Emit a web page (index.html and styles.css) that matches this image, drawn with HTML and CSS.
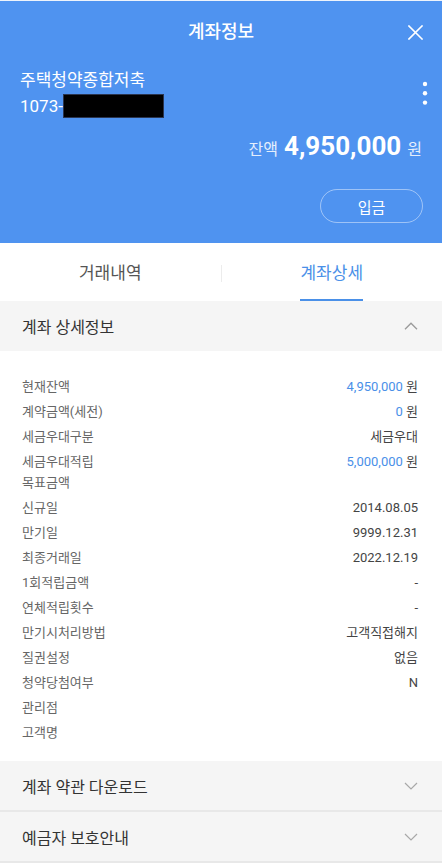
FILE: index.html
```html
<!DOCTYPE html>
<html lang="ko">
<head>
<meta charset="utf-8">
<title>계좌정보</title>
<link rel="stylesheet" href="styles.css">
</head>
<body>
<header class="hero">
  <div class="topbar">
    <span></span>
    <h1 class="title">계좌정보</h1>
    <button class="icon-btn close" aria-label="닫기">
      <svg width="15" height="15" viewBox="0 0 15 15"><path d="M1 1L14 14M14 1L1 14" stroke="#fff" stroke-width="1.6" fill="none" stroke-linecap="square"/></svg>
    </button>
  </div>
  <div class="account">
    <div class="acc-info">
      <div class="acc-name">주택청약종합저축</div>
      <div class="acc-no">1073-<span class="mask"></span></div>
    </div>
    <button class="icon-btn more" aria-label="더보기">
      <svg width="6" height="24" viewBox="0 0 6 24"><circle cx="3" cy="3" r="2.2" fill="#fff"/><circle cx="3" cy="12.3" r="2.2" fill="#fff"/><circle cx="3" cy="21.6" r="2.2" fill="#fff"/></svg>
    </button>
  </div>
  <div class="balance"><span class="bal-label">잔액</span><strong class="bal-amount">4,950,000</strong><span class="bal-unit">원</span></div>
  <div class="actions"><button class="deposit">입금</button></div>
</header>

<nav class="tabs">
  <div class="tab"><span class="tab-label">거래내역</span></div>
  <div class="tab-divider"></div>
  <div class="tab active"><span class="tab-label">계좌상세</span></div>
</nav>

<section class="panel">
  <div class="panel-head">
    <span>계좌 상세정보</span>
    <svg width="14" height="8" viewBox="0 0 14 8"><path d="M1 7.2L7 1.2L13 7.2" stroke="#9a9a9a" stroke-width="1.3" fill="none"/></svg>
  </div>
  <dl class="details">
    <div class="row"><dt>현재잔액</dt><dd><span class="num">4,950,000</span> 원</dd></div>
    <div class="row"><dt>계약금액(세전)</dt><dd><span class="num">0</span> 원</dd></div>
    <div class="row"><dt>세금우대구분</dt><dd>세금우대</dd></div>
    <div class="row"><dt>세금우대적립<br>목표금액</dt><dd><span class="num">5,000,000</span> 원</dd></div>
    <div class="row"><dt>신규일</dt><dd>2014.08.05</dd></div>
    <div class="row"><dt>만기일</dt><dd>9999.12.31</dd></div>
    <div class="row"><dt>최종거래일</dt><dd>2022.12.19</dd></div>
    <div class="row"><dt>1회적립금액</dt><dd>-</dd></div>
    <div class="row"><dt>연체적립횟수</dt><dd>-</dd></div>
    <div class="row"><dt>만기시처리방법</dt><dd>고객직접해지</dd></div>
    <div class="row"><dt>질권설정</dt><dd>없음</dd></div>
    <div class="row"><dt>청약당첨여부</dt><dd>N</dd></div>
    <div class="row"><dt>관리점</dt><dd></dd></div>
    <div class="row"><dt>고객명</dt><dd></dd></div>
  </dl>
</section>

<section class="fold">
  <span>계좌 약관 다운로드</span>
  <svg width="14" height="8" viewBox="0 0 14 8"><path d="M1 1L7 7L13 1" stroke="#a8a8a8" stroke-width="1.2" fill="none"/></svg>
</section>
<section class="fold">
  <span>예금자 보호안내</span>
  <svg width="14" height="8" viewBox="0 0 14 8"><path d="M1 1L7 7L13 1" stroke="#a8a8a8" stroke-width="1.2" fill="none"/></svg>
</section>
</body>
</html>
```

FILE: styles.css
```css
* { box-sizing: border-box; }
body {
  margin: 0;
  width: 442px;
  background: #fff;
  font-family: Roboto, "Noto Sans CJK KR", sans-serif;
  color: #333;
}
button {
  font-family: inherit;
  background: none;
  border: 0;
  padding: 0;
  cursor: pointer;
}
.hero {
  background: #4f93f0;
  color: #fff;
  border-top: 1px solid #eef3fb;
  padding-bottom: 20px;
}
.topbar {
  height: 62px;
  display: grid;
  grid-template-columns: 1fr auto 1fr;
  align-items: center;
}
.title {
  margin: 0;
  font-size: 18px;
  font-weight: 500;
  line-height: 26px;
}
.close {
  justify-self: end;
  margin-right: 19px;
  display: flex;
}
.account {
  display: flex;
  align-items: center;
  justify-content: space-between;
  padding: 4px 14px 0 20px;
}
.acc-name, .acc-no {
  font-size: 17px;
  line-height: 26px;
}
.acc-no {
  display: flex;
  align-items: center;
}
.mask {
  display: inline-block;
  width: 101px;
  height: 24px;
  background: #000;
  border: 1px solid #2a3550;
}
.more { display: flex; }
.balance {
  margin-top: 10px;
  padding-right: 20px;
  height: 34px;
  display: flex;
  justify-content: flex-end;
  align-items: baseline;
  gap: 6px;
  line-height: 34px;
}
.bal-label, .bal-unit {
  font-size: 16px;
  color: #e4eefc;
}
.bal-amount {
  font-size: 26px;
  font-weight: 700;
}
.actions {
  display: flex;
  justify-content: flex-end;
  padding-right: 19px;
  margin-top: 26px;
}
.deposit {
  width: 103px;
  height: 34px;
  border: 1px solid rgba(255, 255, 255, 0.45);
  border-radius: 17px;
  color: #fff;
  font-size: 15px;
}
.tabs {
  display: flex;
  align-items: flex-end;
  height: 58px;
  background: #fff;
}
.tab {
  flex: 1;
  display: flex;
  justify-content: center;
}
.tab-label {
  padding: 18px 0 14px;
  border-bottom: 2px solid transparent;
  font-size: 17px;
  line-height: 24px;
  color: #555;
}
.tab.active .tab-label {
  color: #4a90e8;
  border-bottom-color: #4a90e8;
}
.tab-divider {
  width: 1px;
  height: 17px;
  background: #ececec;
  align-self: center;
  margin-top: 2px;
}
.panel-head, .fold {
  display: flex;
  align-items: center;
  justify-content: space-between;
  background: #f5f5f5;
  padding: 0 24px 0 22px;
  font-size: 16px;
  color: #333;
}
.panel-head { height: 50px; }
.fold {
  height: 51px;
  border-bottom: 2px solid #e8e8e8;
}
.details {
  margin: 0;
  padding: 23px 24px 16px 22px;
}
.row {
  display: flex;
  justify-content: space-between;
  padding: 2px 0;
  line-height: 21px;
  font-size: 13px;
}
.row dt { color: #666; }
.row dd {
  margin: 0;
  color: #444;
  text-align: right;
}
.num { color: #4a90e8; }
```
